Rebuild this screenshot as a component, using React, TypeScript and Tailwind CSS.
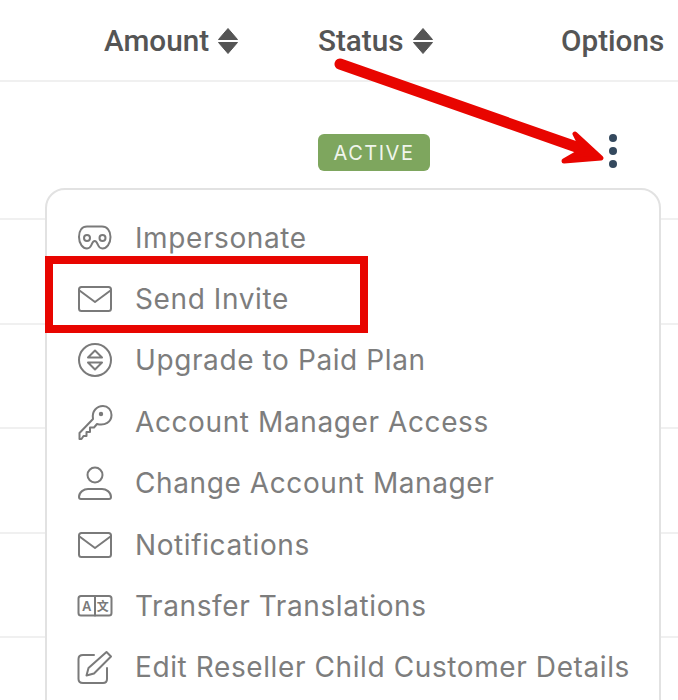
const iconProps = {
  width: 36,
  height: 36,
  viewBox: "0 0 36 36",
  fill: "none",
  stroke: "#7a7a7a",
  strokeWidth: 2,
  strokeLinecap: "round" as const,
  strokeLinejoin: "round" as const,
};

const MaskIcon = () => (
  <svg {...iconProps}>
    <path d="M10 6.500h15c5 0 8.500 4 8.500 10.500 0 7-4 11.500-8 11.500-2.500 0-3.500-1-4.500-3.500-1-2.500-1.500-4-3.300-4s-2.300 1.500-3.300 4C13.400 27.500 12.500 28.500 10 28.500 6 28.500 2 24 2 17 2 10.500 5 6.500 10 6.500z" />
    <circle cx="10" cy="18" r="3" />
    <circle cx="25.500" cy="18" r="3" />
  </svg>
);

const MailIcon = () => (
  <svg {...iconProps}>
    <rect x="2" y="6" width="32" height="24" rx="2.500" />
    <path d="M2.500 9.500 18 21 33.500 9.500" />
  </svg>
);

const UpgradeIcon = () => (
  <svg {...iconProps}>
    <circle cx="18" cy="18" r="16" />
    <path d="M18 8.500 25 15.500H11zM18 27.500 25 20.500H11z" />
  </svg>
);

const KeyIcon = () => (
  <svg {...iconProps}>
    <path d="M2.500 35v-6L16 15C14.500 7 20 2 26 2c5 0 8.500 4 8.500 9 0 7-6.500 11-14.500 9l-3 3.500h-4v4.500H9.500v4H6.500L4.500 35z" />
    <circle cx="24" cy="10" r="1.200" fill="#7a7a7a" />
  </svg>
);

const UserIcon = () => (
  <svg {...iconProps}>
    <circle cx="18" cy="10" r="7.500" />
    <path d="M4 34c-1.500 0-2-1-2-2 0-5 5-8 9-8h14c4 0 9 3 9 8 0 1-.5 2-2 2z" />
  </svg>
);

const TranslateIcon = () => (
  <svg {...iconProps}>
    <rect x="1.500" y="8" width="33" height="19.500" rx="2.500" />
    <path d="M18 8v19.500" />
    <text x="10" y="22.500" textAnchor="middle" fontSize="13" fontFamily="Inter, sans-serif" fontWeight="600" fill="#7a7a7a" stroke="none">
      A
    </text>
    <text x="26" y="22.500" textAnchor="middle" fontSize="12" fontWeight="700" fontFamily="'Noto Sans CJK SC', sans-serif" fill="#7a7a7a" stroke="none">
      文
    </text>
  </svg>
);

const EditIcon = () => (
  <svg {...iconProps}>
    <path d="M17 6H6C3 6 1.500 7.500 1.500 10v20c0 2.500 1.500 4 4.500 4h20c2.500 0 4-1.500 4-4V19" />
    <path d="M29.500 3 34 7.500 17 24.500l-7.500 2 2-7.500z" />
  </svg>
);

const menuItems = [
  { label: "Impersonate", icon: <MaskIcon /> },
  { label: "Send Invite", icon: <MailIcon /> },
  { label: "Upgrade to Paid Plan", icon: <UpgradeIcon /> },
  { label: "Account Manager Access", icon: <KeyIcon /> },
  { label: "Change Account Manager", icon: <UserIcon /> },
  { label: "Notifications", icon: <MailIcon /> },
  { label: "Transfer Translations", icon: <TranslateIcon /> },
  { label: "Edit Reseller Child Customer Details", icon: <EditIcon /> },
];

const SortIcon = () => (
  <svg width="20" height="26" viewBox="0 0 20 26" className="ml-[9px]" fill="#555555">
    <path d="M10 0.500 19.500 11.500H0.500zM10 25.500 0.500 14.500H19.500z" stroke="#555555" strokeLinejoin="round" />
  </svg>
);

const rows = [0, 1, 2, 3];

export default function App() {
  return (
    <div className="relative h-[700px] w-[678px] overflow-hidden bg-white font-['Inter',sans-serif]">
      {/* table */}
      <div className="flex h-[82px] items-center border-b-2 border-[#f0f0f0] pt-[2px] pl-[104px] font-['Roboto',sans-serif] text-[29.700px] font-medium text-[#555555]">
        <div className="flex w-[214px] items-center">
          Amount
          <SortIcon />
        </div>
        <div className="flex w-[243px] items-center">
          Status
          <SortIcon />
        </div>
        <div>Options</div>
      </div>
      <div className="flex h-[138px] items-center border-b-2 border-[#f0f0f0] pl-[318px] pt-[4px]">
        <div className="flex h-[37px] w-[112px] items-center justify-center rounded-[6px] bg-[#7ea65e] pt-[1px] text-[20px] tracking-[1.500px] text-[#f0f5ec]">
          ACTIVE
        </div>
        <div className="ml-[179px] mb-[2px] flex flex-col gap-[5px]">
          <div className="size-[8px] rounded-full bg-[#34495e]" />
          <div className="size-[8px] rounded-full bg-[#34495e]" />
          <div className="size-[8px] rounded-full bg-[#34495e]" />
        </div>
      </div>
      {rows.map((r) => (
        <div key={r} className="h-[104.500px] border-b-2 border-[#f0f0f0]" />
      ))}

      {/* dropdown menu */}
      <div className="absolute left-[45px] top-[188px] w-[616px] rounded-[20px] border-2 border-[#e2e2e2] bg-white pb-10 pl-[30px] pt-[17px]">
        {menuItems.map((item) => (
          <div key={item.label} className="flex h-[61.400px] items-center gap-[22px] text-[28px] tracking-[0.600px] whitespace-nowrap text-[#7d7d7d]">
            {item.icon}
            {item.label}
          </div>
        ))}
      </div>

      {/* annotations */}
      <div className="absolute left-[45px] top-[256px] h-[77px] w-[323px] border-[8px] border-[#e80500]" />
      <svg className="absolute left-0 top-0" width="678" height="700" fill="none">
        <path d="M340 64 585 150" stroke="#e80500" strokeWidth="11" strokeLinecap="round" />
        <path d="M575 134 601 158 564 161 583 150z" fill="#e80500" stroke="#e80500" strokeWidth="5" strokeLinejoin="round" />
      </svg>
    </div>
  );
}
